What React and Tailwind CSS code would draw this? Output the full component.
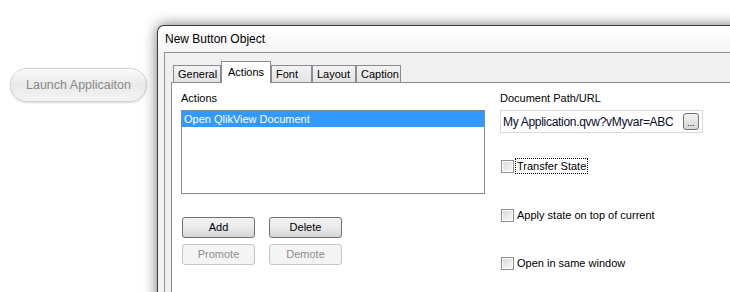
import React from "react";

const font = { fontFamily: '"Liberation Sans", Arial, sans-serif' };

function Tab({ label, width, active }) {
  if (active) {
    return (
      <div
        className={`relative z-10 -mb-px h-[22px] ${width} border border-b-0 border-[#898c95] bg-white pl-[6px] pt-[3px] text-[11px] leading-[14px] text-black`}
      >
        {label}
      </div>
    );
  }
  return (
    <div
      className={`h-[17px] ${width} border border-b-0 border-[#898c95] bg-gradient-to-b from-[#f3f3f3] to-[#e3e3e3] pl-[4px] pt-[1px] text-[11px] leading-[14px] text-black`}
    >
      {label}
    </div>
  );
}

function WinButton({ label, disabled }) {
  return disabled ? (
    <div className="flex h-[21px] w-[73px] items-center justify-center rounded-[3px] border border-[#c4c6c9] bg-[#f4f4f4] text-[11px] text-[#8d8d8d]">
      {label}
    </div>
  ) : (
    <div className="flex h-[21px] w-[73px] items-center justify-center rounded-[3px] border border-[#707070] bg-gradient-to-b from-[#f2f2f2] via-[#ebebeb] to-[#d6d6d6] text-[11px] text-black">
      {label}
    </div>
  );
}

function CheckRow({ label, focus, className = "" }) {
  return (
    <div className={`flex h-[16px] items-center ${className}`}>
      <div className="h-[13px] w-[13px] border border-[#8f8f8f] bg-white p-[1px]">
        <div className="h-full w-full bg-gradient-to-br from-[#dcdcdc] to-[#f8f8f8]" />
      </div>
      <span
        className={`ml-[1px] px-[1px] text-[11px] leading-[14px] text-black ${
          focus ? "border border-dotted border-black" : "border border-transparent"
        }`}
      >
        {label}
      </span>
    </div>
  );
}

export default function App() {
  return (
    <div className="flex h-[292px] w-[730px] overflow-hidden bg-white" style={font}>
      {/* desktop button */}
      <div className="w-[157px] shrink-0 pl-[10px] pt-[68px]">
        <div className="flex h-[34px] w-[137px] items-center rounded-full border border-[#cfcfcf] bg-gradient-to-b from-[#fafafa] via-[#e9e9e9] to-[#f4f4f4] pl-[15px] text-[12.5px] text-[#8a8a8a] shadow-[0_1px_2px_rgba(0,0,0,0.15),inset_0_1px_0_#ffffff]">
          Launch Applicaiton
        </div>
      </div>

      {/* dialog window */}
      <div className="mt-[25px] h-[300px] w-[620px] shrink-0 rounded-tl-[7px] border-l border-t border-[#3a3a3a] bg-[#f3f3f3] shadow-[0_0_14px_rgba(0,0,0,0.55)]">
        <div className="flex h-[26px] items-center rounded-tl-[7px] bg-gradient-to-b from-white to-[#f5f5f5] pl-[7px] text-[12px] text-black">
          New Button Object
        </div>
        <div className="ml-[6px] h-full border-l border-t border-[#8e8f8f] bg-[#f0f0f0] pl-[6px] pt-[8px]">
          <div className="flex h-[21px] items-end pl-[2px]">
            <Tab label="General" width="w-[48px]" />
            <Tab label="Actions" width="w-[50px]" active />
            <Tab label="Font" width="w-[41px]" />
            <Tab label="Layout" width="w-[44px]" />
            <Tab label="Caption" width="w-[45px]" />
          </div>
          <div className="flex h-full gap-[15px] border-l border-t border-[#898c95] bg-white pl-[9px] pt-[7px]">
            {/* left column */}
            <div className="w-[304px]">
              <div className="h-[16px] text-[11px] leading-[16px] text-black">Actions</div>
              <div className="mt-[4px] h-[84px] border border-[#828790] bg-white">
                <div className="h-[16px] bg-[#3399ff] pl-[2px] text-[11px] leading-[16px] text-white">
                  Open QlikView Document
                </div>
              </div>
              <div className="ml-[1px] mt-[23px] flex flex-col gap-[6px]">
                <div className="flex gap-[14px]">
                  <WinButton label="Add" />
                  <WinButton label="Delete" />
                </div>
                <div className="flex gap-[14px]">
                  <WinButton label="Promote" disabled />
                  <WinButton label="Demote" disabled />
                </div>
              </div>
            </div>

            {/* right column */}
            <div className="w-[210px]">
              <div className="h-[16px] text-[11px] leading-[16px] text-black">Document Path/URL</div>
              <div className="mt-[4px] flex h-[23px] w-[203px] items-center justify-between border border-[#d9d9d9] bg-white pl-[2px] pr-[3px]">
                <span className="whitespace-nowrap text-[12px] tracking-[-0.3px] text-[#0a0a2a]">My Application.qvw?vMyvar=ABC</span>
                <div className="flex h-[17px] w-[16px] shrink-0 items-end justify-center rounded-[3px] border border-[#707070] bg-gradient-to-b from-[#f2f2f2] to-[#d8d8d8] pb-[2px] text-[9px] leading-[8px] text-black">
                  ...
                </div>
              </div>
              <div className="flex flex-col pl-[1px]">
                <CheckRow label="Transfer State" focus className="mt-[25px]" />
                <CheckRow label="Apply state on top of current" className="mt-[33px]" />
                <CheckRow label="Open in same window" className="mt-[32px]" />
              </div>
            </div>
          </div>
        </div>
      </div>
    </div>
  );
}
